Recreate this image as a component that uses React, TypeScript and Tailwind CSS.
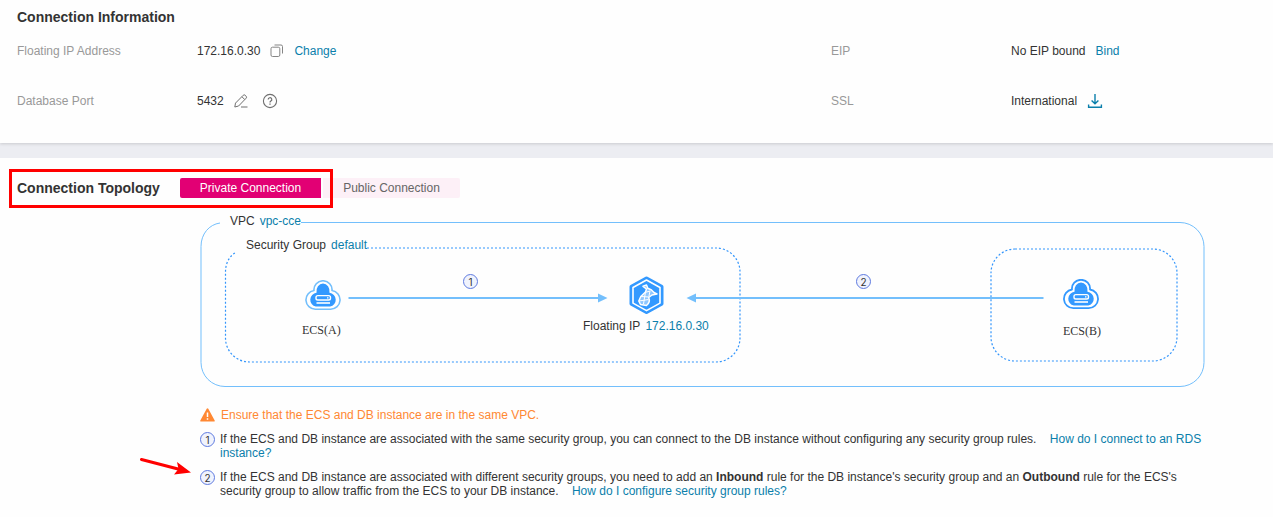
import type { ReactNode } from "react";

const linkClass = "text-[#0b7fab] hover:underline";

function CopyIcon() {
  return (
    <svg width="14" height="14" viewBox="0 0 14 14" fill="none" stroke="#858585" aria-hidden="true">
      <rect x="1" y="3.2" width="8.800" height="9.300" rx="1.500" />
      <path d="M4.500 1h6.500a1.500 1.500 0 0 1 1.500 1.500v7" />
    </svg>
  );
}

function EditIcon() {
  return (
    <svg width="14" height="14" viewBox="0 0 14 14" fill="none" stroke="#6f6f6f" aria-hidden="true">
      <path d="M.8 13l.7-3.900L9.200 1.300a1.400 1.400 0 0 1 2 0l.9.9a1.400 1.400 0 0 1 0 2L4.600 12zM8 2.800l2.700 2.700M7 13h6.500" />
    </svg>
  );
}

function HelpIcon() {
  return (
    <svg width="16" height="16" viewBox="0 0 16 16" fill="none" stroke="#6f6f6f" aria-hidden="true">
      <circle cx="8" cy="8" r="6.600" strokeWidth="1.100" />
      <path d="M6.200 6.600a1.800 1.800 0 1 1 2.700 1.500c-.6.4-.9.6-.9 1.300" strokeWidth="1.200" />
      <path d="M8 10.400v1.300" strokeWidth="1.300" />
    </svg>
  );
}

function DownloadIcon() {
  return (
    <svg width="16" height="16" viewBox="0 0 16 16" fill="none" stroke="#0b7fab" strokeWidth="1.400" aria-hidden="true">
      <path d="M8 1v9.500M4.600 7.400L8 10.800l3.400-3.400M1.600 11.500v2.800h12.800v-2.800" />
    </svg>
  );
}

function WarningIcon() {
  return (
    <svg width="15" height="14" viewBox="0 0 15 14" aria-hidden="true">
      <path d="M6.700.8a.9.9 0 0 1 1.600 0l6.400 11.600a.8.8 0 0 1-.7 1.200H1a.8.8 0 0 1-.7-1.200z" fill="#ff8833" />
      <path d="M7.500 4.500v4.400M7.500 10.200v1.500" stroke="#fff" strokeWidth="1.500" />
    </svg>
  );
}

function CloudServer({ rim, rimWidth }: { rim: string; rimWidth: number }) {
  return (
    <svg width="36" height="31" viewBox="0 0 36 31" fill="none" aria-hidden="true">
      <path
        d="M10.300 29.200A9.400 9.400 0 0 1 9 10.500A9.050 8.800 0 1 1 27 10.500A9.400 9.400 0 0 1 25.700 29.200Z"
        stroke={rim}
        strokeWidth={rimWidth}
        strokeLinejoin="round"
        fill="#fff"
      />
      <path
        d="M10.800 26.600A7 7 0 0 1 11.500 12.800A6.600 8 0 1 1 24.500 12.800A7 7 0 0 1 25.200 26.600Z"
        fill="#3399ff"
      />
      <rect x="11" y="15.600" width="14.500" height="4.400" rx="1.800" stroke="#fff" strokeWidth="1.400" />
      <path d="M22 17.800h1.500" stroke="#fff" strokeWidth="1.300" />
      <path d="M11.500 23h13.500" stroke="#fff" strokeWidth="1.600" />
    </svg>
  );
}

function DatabaseHexagon() {
  return (
    <svg width="36" height="39" viewBox="0 0 36 39" fill="none" aria-hidden="true">
      <path d="M17.500 2.500L32.500 10.800v17L17.500 36 2.500 27.800v-17z" fill="#3399ff" stroke="#3399ff" strokeWidth="4" strokeLinejoin="round" />
      <path d="M17.500 4L31 11.500v15.600L17.500 34.600 4 27.100V11.500z" stroke="#fff" strokeWidth="1.600" strokeLinejoin="round" />
      <path
        d="M14 10.300l3.500-1.300 1.300 3.300 3.700 1.700 2.500 2.500 3 1.500-5 1-3.300 2.500c1.300 3 .3 6-2.200 8l-6-1-1.700-3.500 2-4.500 4.700-4.500 1-3z"
        fill="#fff"
        fillOpacity="0.45"
        stroke="#fff"
        strokeWidth="1.500"
        strokeLinejoin="round"
      />
      <path d="M16 16.500l5-1.500-1 5M12 20.500l8 .5M10 25l9.500-1.500M16.500 16l-2 12" stroke="#fff" strokeWidth="1" />
    </svg>
  );
}

function StepBadge({ children }: { children: ReactNode }) {
  return (
    <span className="inline-flex h-[15px] w-[15px] shrink-0 items-center justify-center rounded-full border border-[#5f7be0] bg-[#f0f3fd] font-[Inter,sans-serif] text-[10px] leading-none text-[#333]">
      {children}
    </span>
  );
}

function Field({ label, children }: { label: string; children: ReactNode }) {
  return (
    <div className="flex h-[50px] items-center">
      <dt className="w-[180px] shrink-0 text-[#999]">{label}</dt>
      <dd className="flex items-center">{children}</dd>
    </div>
  );
}

function Topology() {
  return (
    <figure className="relative h-[198px] w-[1006px] text-[#333]">
      <svg className="absolute inset-0" width="1006" height="180" viewBox="0 0 1006 180" fill="none" aria-hidden="true">
        <path
          d="M101 12.500H980a24 24 0 0 1 24 24V152.500a24 24 0 0 1-24 24H25a24 24 0 0 1-24-24V36.500C1 24 9 14.500 20 13"
          stroke="#73bffc"
        />
        <path
          d="M167 38H516a24 24 0 0 1 24 24V128a24 24 0 0 1-24 24H50a24 24 0 0 1-24.500-24V62c0-8 3-15 10-19.500"
          stroke="#3395fb"
          strokeWidth="1.200"
          strokeDasharray="2 2"
        />
        <rect x="791" y="39" width="186" height="112" rx="24" stroke="#3395fb" strokeWidth="1.200" strokeDasharray="2 2" />
        <path d="M148.500 88H400M843.500 88H495" stroke="#73bffc" strokeWidth="2" />
        <path d="M398 83.500l9.500 4.500-9.500 4.500zM496 83.500L486.500 88l9.500 4.500z" fill="#73bffc" />
      </svg>
      <p className="absolute left-[30px] top-1 flex gap-[5px]">
        VPC
        <a href="#vpc" className={linkClass}>vpc-cce</a>
      </p>
      <p className="absolute left-[46px] top-7 flex gap-[5px]">
        Security Group
        <a href="#security-group" className={linkClass}>default</a>
      </p>
      <div className="absolute left-[105px] top-[70px]">
        <CloudServer rim="#73bffc" rimWidth={1.6} />
      </div>
      <p className="absolute left-[102px] top-[113px] font-['Liberation_Serif',serif]">ECS(A)</p>
      <div className="absolute left-[263px] top-[64px] flex">
        <StepBadge>1</StepBadge>
      </div>
      <div className="absolute left-[429px] top-[66px]">
        <DatabaseHexagon />
      </div>
      <p className="absolute left-[383px] top-[109px] flex gap-[5px] whitespace-nowrap">
        Floating IP
        <a href="#floating-ip" className={linkClass}>172.16.0.30</a>
      </p>
      <div className="absolute left-[656px] top-[64px] flex">
        <StepBadge>2</StepBadge>
      </div>
      <div className="absolute left-[863px] top-[69px]">
        <CloudServer rim="#3399ff" rimWidth={1.8} />
      </div>
      <p className="absolute left-[863px] top-[114px] font-['Liberation_Serif',serif]">ECS(B)</p>
    </figure>
  );
}

export default function App() {
  return (
    <main className="min-h-screen bg-[#ecedf2] font-['Liberation_Sans',sans-serif] text-[12px] leading-[14px] text-[#333]">
      <section className="bg-[#fefefe] pt-[9px] pb-[17px] pl-[17px] shadow-[0_1px_3px_rgba(0,0,0,0.15)]">
        <h2 className="text-[14px] font-bold leading-4">Connection Information</h2>
        <dl className="grid grid-cols-[814fr_442fr] pt-px">
          <Field label="Floating IP Address">
            <span>172.16.0.30</span>
            <button type="button" aria-label="Copy" className="mx-2.5 cursor-pointer">
              <CopyIcon />
            </button>
            <a href="#change" className={linkClass}>Change</a>
          </Field>
          <Field label="EIP">
            <span>No EIP bound</span>
            <a href="#bind" className={`ml-2.5 ${linkClass}`}>Bind</a>
          </Field>
          <Field label="Database Port">
            <span>5432</span>
            <button type="button" aria-label="Edit port" className="ml-2.5 cursor-pointer">
              <EditIcon />
            </button>
            <button type="button" aria-label="Help" className="ml-3.5 cursor-pointer">
              <HelpIcon />
            </button>
          </Field>
          <Field label="SSL">
            <span>International</span>
            <button type="button" aria-label="Download certificate" className="ml-2.5 cursor-pointer">
              <DownloadIcon />
            </button>
          </Field>
        </dl>
      </section>

      <section className="mt-[15px] min-h-[359px] bg-[#fefefe] pl-[17px] pt-5 pb-4">
        <header className="relative flex items-center">
          <h2 className="w-[163px] text-[14px] font-bold leading-4">Connection Topology</h2>
          <div role="tablist" className="flex gap-0.5">
            <button type="button" role="tab" aria-selected="true" className="h-5 w-[141px] cursor-pointer rounded-l-xs bg-[#e20074] text-white">
              Private Connection
            </button>
            <button type="button" role="tab" aria-selected="false" className="h-5 w-[137px] cursor-pointer rounded-r-xs bg-[#fdf0f7] text-[#666]">
              Public Connection
            </button>
          </div>
          <div className="pointer-events-none absolute -left-2 -top-[9px] h-[39px] w-[324px] border-[3px] border-[#ff0000]" />
        </header>

        <div className="pl-[183px] pr-[68px] pt-3">
          <Topology />
          <div className="relative flex flex-col gap-2.5">
            <p className="flex items-center gap-1.5 text-[#ff8833]">
              <WarningIcon />
              Ensure that the ECS and DB instance are in the same VPC.
            </p>
            <div className="flex gap-[5px]">
              <StepBadge>1</StepBadge>
              <p>
                If the ECS and DB instance are associated with the same security group, you can connect to the DB
                instance without configuring any security group rules.{" "}
                <a href="#connect" className={`ml-2.5 ${linkClass}`}>How do I connect to an RDS instance?</a>
              </p>
            </div>
            <div className="flex gap-[5px]">
              <StepBadge>2</StepBadge>
              <p>
                If the ECS and DB instance are associated with different security groups, you need to add an{" "}
                <b>Inbound</b> rule for the DB instance's security group and an <b>Outbound</b> rule for the ECS's
                security group to allow traffic from the ECS to your DB instance.{" "}
                <a href="#rules" className={`ml-2.5 ${linkClass}`}>How do I configure security group rules?</a>
              </p>
            </div>
            <svg className="absolute -left-[60px] top-12" width="53" height="22" viewBox="0 0 53 22" aria-hidden="true">
              <path d="M1.500 3.500L40 13.500" stroke="#ff0000" strokeWidth="3" strokeLinecap="round" />
              <path d="M37 6L51 16.500 34 18.500 38.500 13z" fill="#ff0000" />
            </svg>
          </div>
        </div>
      </section>
    </main>
  );
}
